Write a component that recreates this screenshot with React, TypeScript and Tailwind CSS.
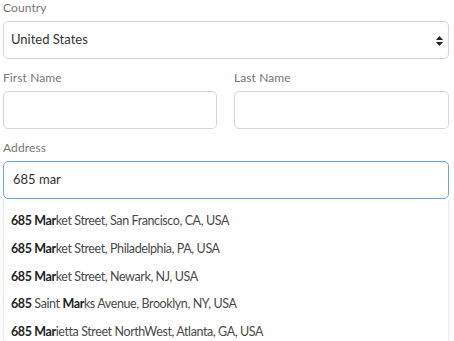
const suggestions: { parts: [string, boolean][] }[] = [
  { parts: [["685 Mar", true], ["ket Street, San Francisco, CA, USA", false]] },
  { parts: [["685 Mar", true], ["ket Street, Philadelphia, PA, USA", false]] },
  { parts: [["685 Mar", true], ["ket Street, Newark, NJ, USA", false]] },
  { parts: [["685", true], [" Saint ", false], ["Mar", true], ["ks Avenue, Brooklyn, NY, USA", false]] },
  { parts: [["685 Mar", true], ["ietta Street NorthWest, Atlanta, GA, USA", false]] },
];

function Label({ children }: { children: string }) {
  return <div className="text-[12px] leading-[16px] text-[#777] mb-[5px] tracking-[0.1px]">{children}</div>;
}

export default function App() {
  return (
    <div
      className="w-[454px] h-[341px] overflow-hidden bg-white pl-[3px] pr-[5px]"
      style={{ fontFamily: "Lato, 'Liberation Sans', sans-serif" }}
    >
      <Label>Country</Label>
      <div className="relative h-[38px] border border-[#d6d6d6] rounded-[5px] flex items-center px-[7px]">
        <span className="text-[13px] text-[#333]">United States</span>
        <svg className="absolute right-[5px] top-[14px]" width="7" height="10" viewBox="0 0 7 10">
          <path d="M3.5 0 L7 4 L0 4 Z" fill="#222" />
          <path d="M0 6 L7 6 L3.5 10 Z" fill="#222" />
        </svg>
      </div>

      <div className="flex gap-[17px] mt-[11px]">
        <div className="w-[214px]">
          <Label>First Name</Label>
          <div className="h-[38px] border border-[#d6d6d6] rounded-[5px]" />
        </div>
        <div className="flex-1">
          <Label>Last Name</Label>
          <div className="h-[38px] border border-[#d6d6d6] rounded-[5px]" />
        </div>
      </div>

      <div className="mt-[11px]">
        <Label>Address</Label>
        <div className="h-[38px] border border-[#6aa4f0] rounded-[5px] flex items-center px-[9px]">
          <span className="text-[13px] text-[#333]">685 mar</span>
        </div>
        <div className="border-x border-[#ececec] pt-[9px] shadow-[0_2px_4px_rgba(0,0,0,0.05)]">
          {suggestions.map((s, i) => (
            <div key={i} className="px-[7px] h-[27.6px] flex items-center text-[12.5px] tracking-[-0.4px] text-[#4a4a4a]">
              <span>
                {s.parts.map(([t, b], j) => (
                  <span key={j} className={b ? "font-bold text-[#222]" : ""}>{t}</span>
                ))}
              </span>
            </div>
          ))}
        </div>
      </div>
    </div>
  );
}
